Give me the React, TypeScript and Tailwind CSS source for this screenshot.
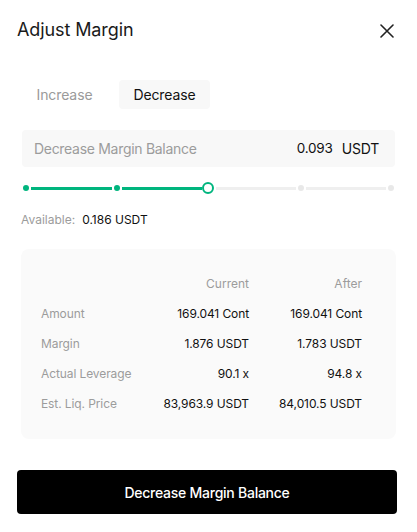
import React from "react";

const rows = [
  ["Amount", "169.041 Cont", "169.041 Cont"],
  ["Margin", "1.876 USDT", "1.783 USDT"],
  ["Actual Leverage", "90.1 x", "94.8 x"],
  ["Est. Liq. Price", "83,963.9 USDT", "84,010.5 USDT"],
];

export default function App() {
  return (
    <div
      className="w-[417px] h-[532px] bg-white text-[#111] relative"
      style={{ fontFamily: "Inter, 'Noto Sans', sans-serif" }}
    >
      <div className="flex items-center justify-between pl-[17px] pr-[23px] pt-[17px]">
        <div className="text-[18px] leading-[26px] text-[#1a1a1a] tracking-[-0.1px]">Adjust Margin</div>
        <svg width="14" height="14" viewBox="0 0 14 14" className="mt-[1px]">
          <path d="M1 1L13 13M13 1L1 13" stroke="#222" strokeWidth="1.6" strokeLinecap="round" />
        </svg>
      </div>

      <div className="flex items-center pl-[22px] mt-[37px]">
        <div className="w-[85px] h-[29px] flex items-center justify-center text-[14px] text-[#9a9a9a] tracking-[-0.1px]">Increase</div>
        <div className="ml-[12px] w-[91px] h-[29px] flex items-center justify-center text-[14px] text-[#111] bg-[#f8f8f8] rounded-[4px] tracking-[-0.1px]">Decrease</div>
      </div>

      <div className="mx-[22px] mt-[21px] h-[37px] bg-[#f8f8f8] rounded-[4px] flex items-center pl-[12px] pr-[16px]">
        <div className="text-[14px] text-[#9c9c9c] flex-1 tracking-[-0.3px]">Decrease Margin Balance</div>
        <div className="text-[13.5px] text-[#111] tracking-[-0.2px]">0.093</div>
        <div className="text-[14px] text-[#111] ml-[9px] tracking-[-0.2px]">USDT</div>
      </div>

      <div className="mx-[23px] mt-[15px] h-[12px] flex items-center">
        <div className="w-[6px] h-[6px] rounded-full bg-[#00b57e]" />
        <div className="w-[81px] h-[3px] mx-[2px] bg-[#00b57e]" />
        <div className="w-[6px] h-[6px] rounded-full bg-[#00b57e]" />
        <div className="w-[80px] h-[3px] ml-[2px] bg-[#00b57e]" />
        <div className="w-[12px] h-[12px] rounded-full border-2 border-[#00b57e] bg-white" />
        <div className="w-[80px] h-[3px] ml-[2px] mr-[2px] bg-[#efefef]" />
        <div className="w-[6px] h-[6px] rounded-full bg-[#e8e8e8]" />
        <div className="w-[80px] h-[3px] mx-[2px] bg-[#efefef]" />
        <div className="w-[6px] h-[6px] rounded-full bg-[#e8e8e8]" />
      </div>

      <div className="flex items-center pl-[21px] mt-[18px] text-[12px] leading-[16px]">
        <span className="text-[#9c9c9c]">Available:</span>
        <span className="ml-[7px] text-[#111]">0.186 USDT</span>
      </div>

      <div className="mx-[21px] mt-[21px] h-[190px] bg-[#fafafa] rounded-[8px] pl-[20px] pr-[34px] pt-[27px]">
        <div className="grid grid-cols-[1fr_105px_113px] text-[12px] leading-[16px] text-[#9c9c9c]">
          <div />
          <div className="text-right">Current</div>
          <div className="text-right">After</div>
        </div>
        <div className="flex flex-col gap-[14px] mt-[14px]">
          {rows.map((r) => (
            <div key={r[0]} className="grid grid-cols-[1fr_105px_113px] text-[12px] leading-[16px] tracking-[-0.1px]">
              <div className="text-[#9c9c9c]">{r[0]}</div>
              <div className="text-right text-[#111]">{r[1]}</div>
              <div className="text-right text-[#111]">{r[2]}</div>
            </div>
          ))}
        </div>
      </div>

      <div className="ml-[17px] mr-[20px] mt-[31px] h-[44px] bg-black rounded-[4px] flex items-center justify-center text-white text-[14px] font-medium tracking-[-0.25px]">
        Decrease Margin Balance
      </div>
    </div>
  );
}
